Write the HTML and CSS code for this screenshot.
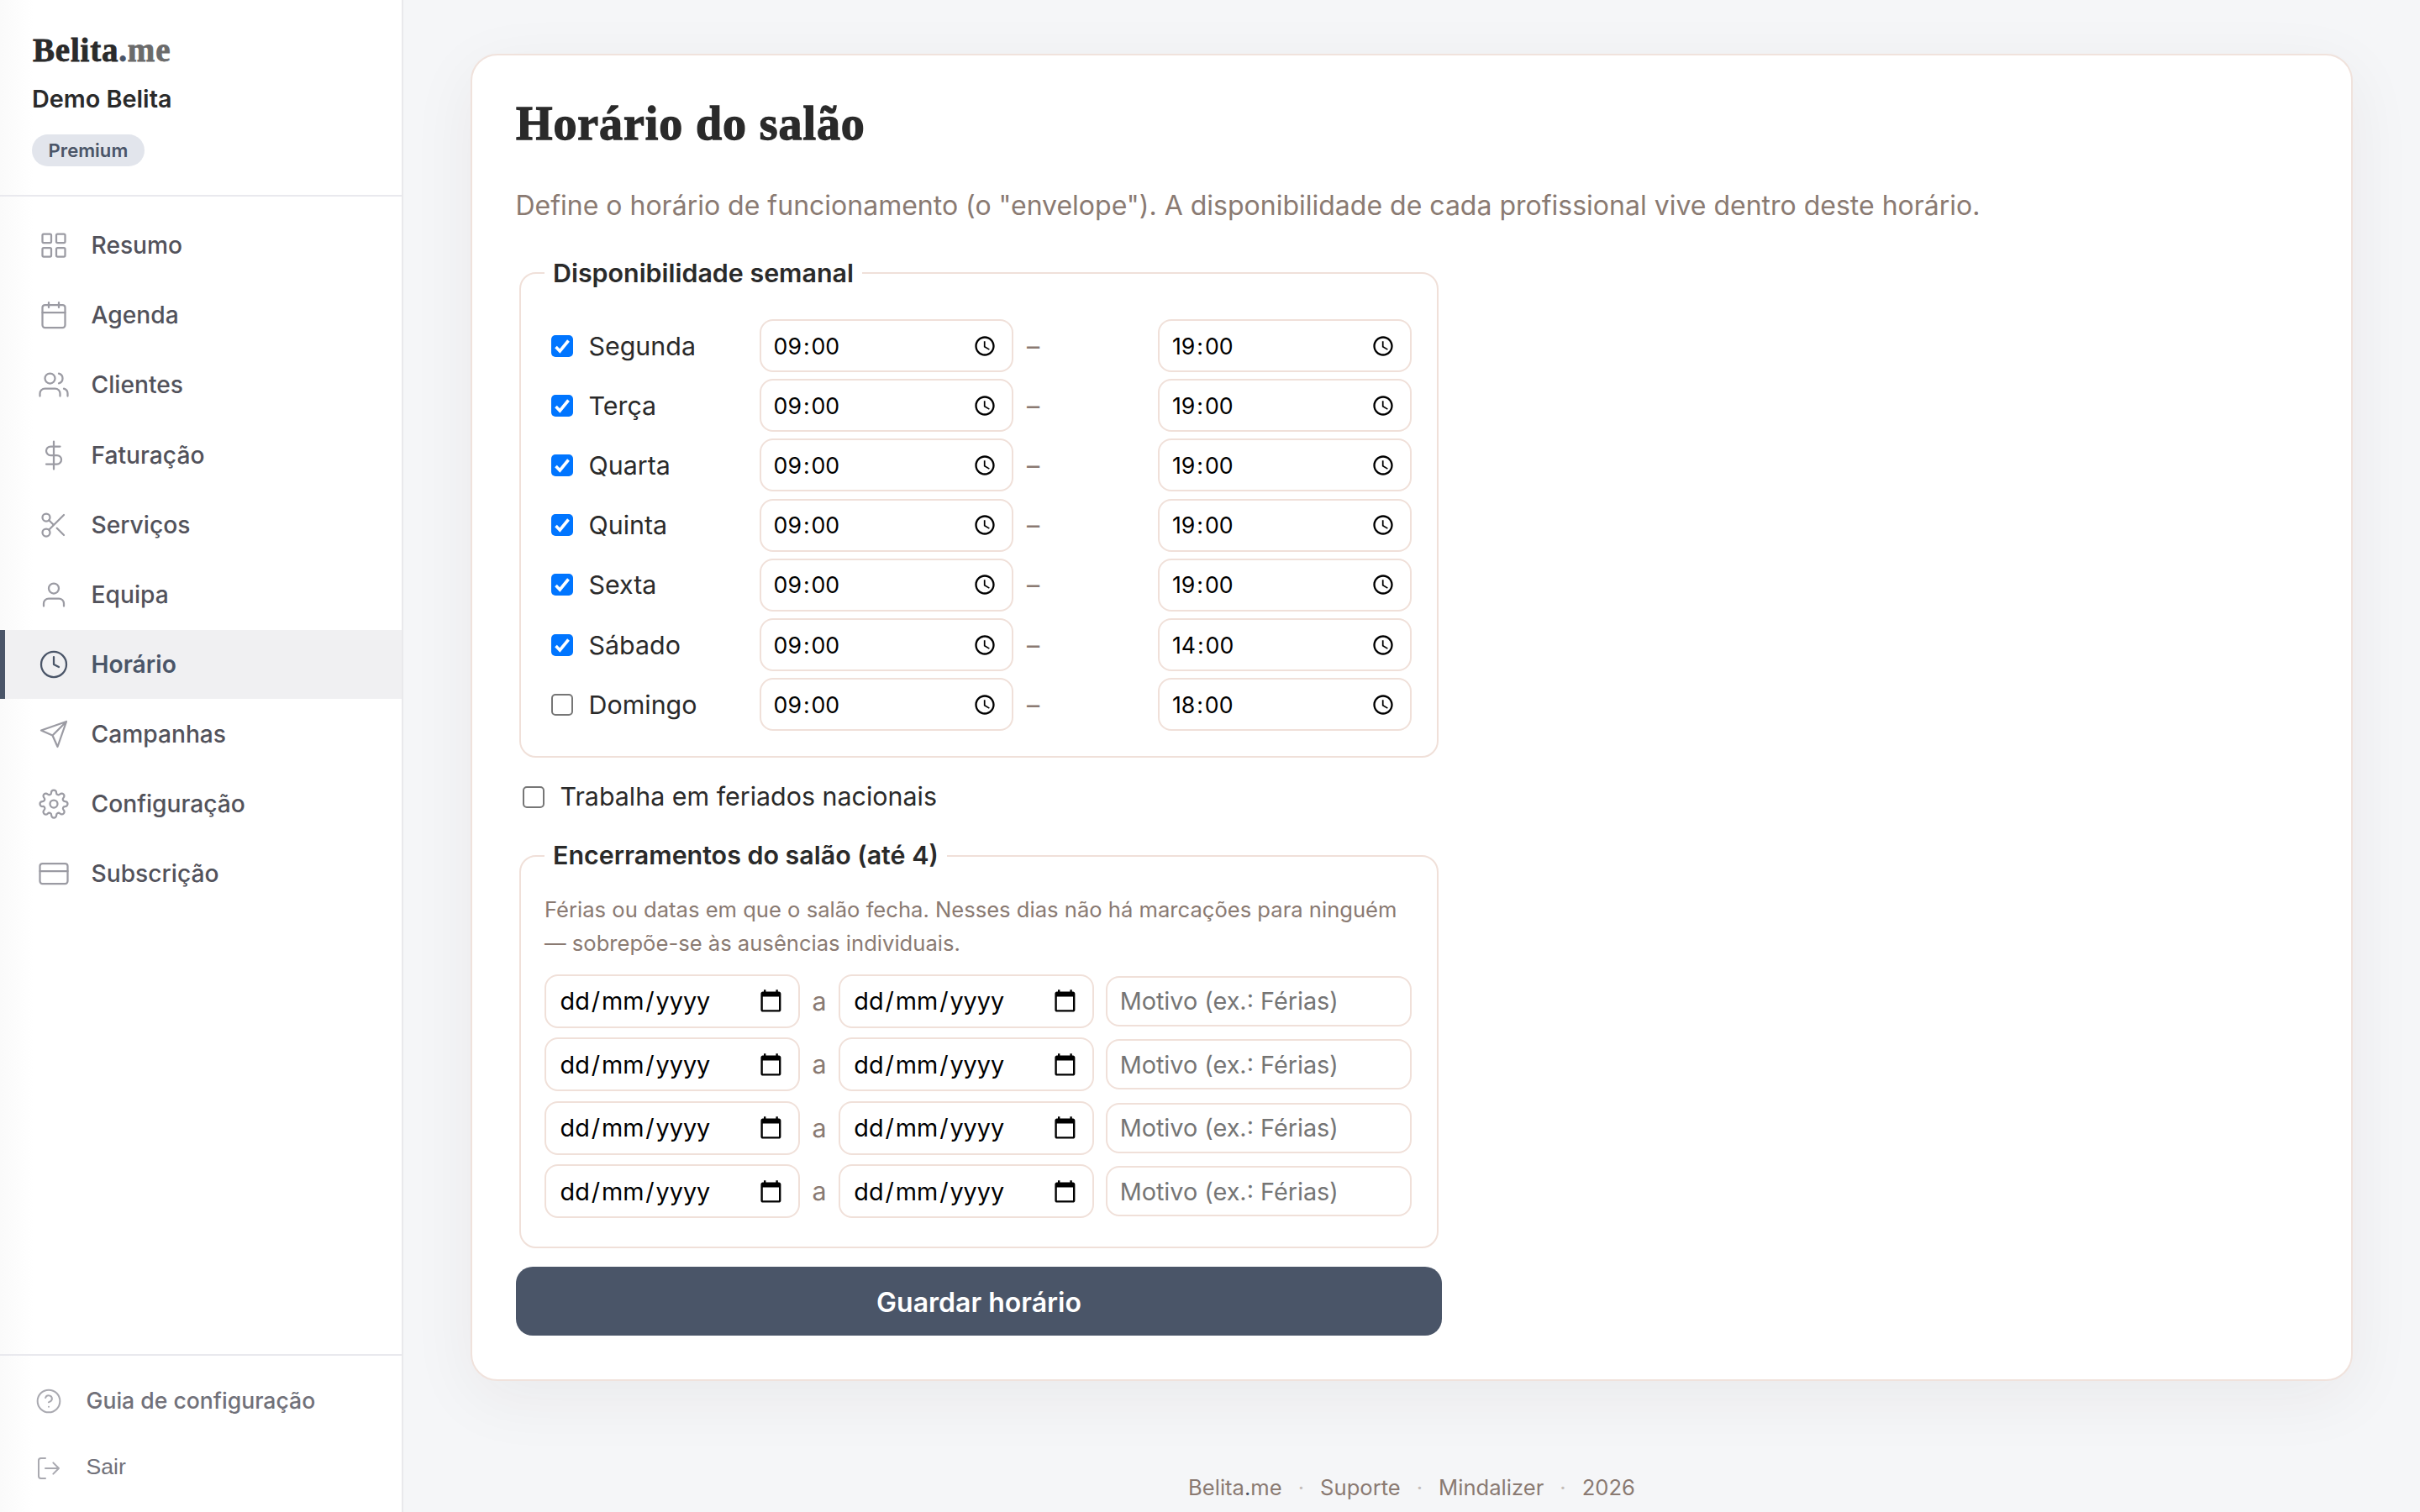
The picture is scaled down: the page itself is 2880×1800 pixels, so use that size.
FILE: index.html
```html
<!DOCTYPE html>
<html lang="pt">
<head>
<meta charset="utf-8">
<title>Horário do salão</title>
<link rel="stylesheet" href="styles.css">
</head>
<body>
<svg class="defs" aria-hidden="true">
  <symbol id="clock-field" viewBox="0 0 24 24"><path d="M11.99 2C6.47 2 2 6.48 2 12s4.47 10 9.99 10C17.52 22 22 17.52 22 12S17.52 2 11.99 2zM12 20c-4.42 0-8-3.58-8-8s3.58-8 8-8 8 3.58 8 8-3.58 8-8 8zm.5-13H11v6l5.25 3.15.75-1.23-4.5-2.67z"/></symbol>
  <symbol id="date-field" viewBox="0 0 24 24"><path d="M20 3h-1V1h-2v2H7V1H5v2H4c-1.1 0-2 .9-2 2v16c0 1.1.9 2 2 2h16c1.1 0 2-.9 2-2V5c0-1.1-.9-2-2-2zm0 18H4V8h16v13z"/></symbol>
</svg>
<div class="app">
  <aside class="sidebar">
    <header class="brand">
      <div class="logo">Belita<span class="logo-dot">.</span><span class="logo-me">me</span></div>
      <div class="salon">Demo Belita</div>
      <span class="badge">Premium</span>
    </header>
    <nav class="nav">
      <a class="nav-item"><svg class="icon" viewBox="0 0 24 24"><rect x="3" y="3" width="7" height="7" rx="1"/><rect x="14" y="3" width="7" height="7" rx="1"/><rect x="14" y="14" width="7" height="7" rx="1"/><rect x="3" y="14" width="7" height="7" rx="1"/></svg><span>Resumo</span></a>
      <a class="nav-item"><svg class="icon" viewBox="0 0 24 24"><rect x="3" y="4" width="18" height="18" rx="2"/><path d="M16 2v4M8 2v4M3 10h18"/></svg><span>Agenda</span></a>
      <a class="nav-item"><svg class="icon" viewBox="0 0 24 24"><path d="M17 21v-2a4 4 0 0 0-4-4H5a4 4 0 0 0-4 4v2"/><circle cx="9" cy="7" r="4"/><path d="M23 21v-2a4 4 0 0 0-3-3.87M16 3.13a4 4 0 0 1 0 7.75"/></svg><span>Clientes</span></a>
      <a class="nav-item"><svg class="icon" viewBox="0 0 24 24"><path d="M12 1v22M17 5H9.500a3.500 3.500 0 0 0 0 7h5a3.500 3.500 0 0 1 0 7H6"/></svg><span>Faturação</span></a>
      <a class="nav-item"><svg class="icon" viewBox="0 0 24 24"><circle cx="6" cy="6" r="3"/><circle cx="6" cy="18" r="3"/><path d="M20 4L8.120 15.880M14.470 14.480L20 20M8.120 8.120L12 12"/></svg><span>Serviços</span></a>
      <a class="nav-item"><svg class="icon" viewBox="0 0 24 24"><path d="M20 21v-2a4 4 0 0 0-4-4H8a4 4 0 0 0-4 4v2"/><circle cx="12" cy="7" r="4"/></svg><span>Equipa</span></a>
      <a class="nav-item active"><svg class="icon" viewBox="0 0 24 24"><circle cx="12" cy="12" r="10"/><path d="M12 6v6l4 2"/></svg><span>Horário</span></a>
      <a class="nav-item"><svg class="icon" viewBox="0 0 24 24"><path d="M22 2L11 13M22 2l-7 20-4-9-9-4z"/></svg><span>Campanhas</span></a>
      <a class="nav-item"><svg class="icon" viewBox="0 0 24 24"><circle cx="12" cy="12" r="3"/><path d="M19.400 15a1.650 1.650 0 0 0 .33 1.820l.06.06a2 2 0 1 1-2.830 2.830l-.06-.06a1.650 1.650 0 0 0-2.800 1.170V21a2 2 0 0 1-4 0v-.09A1.650 1.650 0 0 0 7.180 19.730l-.06.06a2 2 0 1 1-2.830-2.830l.06-.06A1.650 1.650 0 0 0 3.090 14H3a2 2 0 0 1 0-4h.09A1.650 1.650 0 0 0 4.350 7.180l-.06-.06a2 2 0 1 1 2.830-2.830l.06.06A1.650 1.650 0 0 0 10 3.090V3a2 2 0 0 1 4 0v.09a1.650 1.650 0 0 0 2.820 1.260l.06-.06a2 2 0 1 1 2.830 2.830l-.06.06A1.650 1.650 0 0 0 20.910 10H21a2 2 0 0 1 0 4h-.09a1.650 1.650 0 0 0-1.510 1z"/></svg><span>Configuração</span></a>
      <a class="nav-item"><svg class="icon" viewBox="0 0 24 24"><rect x="1" y="4" width="22" height="16" rx="2"/><path d="M1 10h22"/></svg><span>Subscrição</span></a>
    </nav>
    <footer class="side-foot">
      <a class="foot-item medium"><svg class="icon" viewBox="0 0 24 24"><circle cx="12" cy="12" r="10"/><path d="M9.090 9a3 3 0 0 1 5.830 1c0 2-3 3-3 3M12 17h.01"/></svg><span>Guia de configuração</span></a>
      <a class="foot-item logout"><svg class="icon" viewBox="0 0 24 24"><path d="M9 21H5a2 2 0 0 1-2-2V5a2 2 0 0 1 2-2h4M16 17l5-5-5-5M21 12H9"/></svg><span>Sair</span></a>
    </footer>
  </aside>
  <main class="main">
    <section class="card">
      <h1 class="title">Horário do salão</h1>
      <p class="lead">Define o horário de funcionamento (o "envelope"). A disponibilidade de cada profissional vive dentro deste horário.</p>
      <form class="form">
        <div class="group week">
          <div class="legend">Disponibilidade semanal</div>
          <div class="day"><label class="check"><i class="box on"><svg viewBox="0 0 26 26"><path d="M5.500 14l4.800 5L20.500 6.500"/></svg></i><span>Segunda</span></label><div class="field time"><span>09<i>:</i>00</span><svg><use href="#clock-field"/></svg></div><span class="dash">–</span><div class="field time"><span>19<i>:</i>00</span><svg><use href="#clock-field"/></svg></div></div>
          <div class="day"><label class="check"><i class="box on"><svg viewBox="0 0 26 26"><path d="M5.500 14l4.800 5L20.500 6.500"/></svg></i><span>Terça</span></label><div class="field time"><span>09<i>:</i>00</span><svg><use href="#clock-field"/></svg></div><span class="dash">–</span><div class="field time"><span>19<i>:</i>00</span><svg><use href="#clock-field"/></svg></div></div>
          <div class="day"><label class="check"><i class="box on"><svg viewBox="0 0 26 26"><path d="M5.500 14l4.800 5L20.500 6.500"/></svg></i><span>Quarta</span></label><div class="field time"><span>09<i>:</i>00</span><svg><use href="#clock-field"/></svg></div><span class="dash">–</span><div class="field time"><span>19<i>:</i>00</span><svg><use href="#clock-field"/></svg></div></div>
          <div class="day"><label class="check"><i class="box on"><svg viewBox="0 0 26 26"><path d="M5.500 14l4.800 5L20.500 6.500"/></svg></i><span>Quinta</span></label><div class="field time"><span>09<i>:</i>00</span><svg><use href="#clock-field"/></svg></div><span class="dash">–</span><div class="field time"><span>19<i>:</i>00</span><svg><use href="#clock-field"/></svg></div></div>
          <div class="day"><label class="check"><i class="box on"><svg viewBox="0 0 26 26"><path d="M5.500 14l4.800 5L20.500 6.500"/></svg></i><span>Sexta</span></label><div class="field time"><span>09<i>:</i>00</span><svg><use href="#clock-field"/></svg></div><span class="dash">–</span><div class="field time"><span>19<i>:</i>00</span><svg><use href="#clock-field"/></svg></div></div>
          <div class="day"><label class="check"><i class="box on"><svg viewBox="0 0 26 26"><path d="M5.500 14l4.800 5L20.500 6.500"/></svg></i><span>Sábado</span></label><div class="field time"><span>09<i>:</i>00</span><svg><use href="#clock-field"/></svg></div><span class="dash">–</span><div class="field time"><span>14<i>:</i>00</span><svg><use href="#clock-field"/></svg></div></div>
          <div class="day"><label class="check"><i class="box"></i><span>Domingo</span></label><div class="field time"><span>09<i>:</i>00</span><svg><use href="#clock-field"/></svg></div><span class="dash">–</span><div class="field time"><span>18<i>:</i>00</span><svg><use href="#clock-field"/></svg></div></div>
        </div>
        <label class="check holidays"><i class="box"></i><span>Trabalha em feriados nacionais</span></label>
        <div class="group closures">
          <div class="legend">Encerramentos do salão (até 4)</div>
          <p class="hint">Férias ou datas em que o salão fecha. Nesses dias não há marcações para ninguém<br>— sobrepõe-se às ausências individuais.</p>
          <div class="range"><div class="field date"><span>dd<i>/</i>mm<i>/</i>yyyy</span><svg><use href="#date-field"/></svg></div><span class="to">a</span><div class="field date"><span>dd<i>/</i>mm<i>/</i>yyyy</span><svg><use href="#date-field"/></svg></div><input class="field reason" type="text" placeholder="Motivo (ex.: Férias)"></div>
          <div class="range"><div class="field date"><span>dd<i>/</i>mm<i>/</i>yyyy</span><svg><use href="#date-field"/></svg></div><span class="to">a</span><div class="field date"><span>dd<i>/</i>mm<i>/</i>yyyy</span><svg><use href="#date-field"/></svg></div><input class="field reason" type="text" placeholder="Motivo (ex.: Férias)"></div>
          <div class="range"><div class="field date"><span>dd<i>/</i>mm<i>/</i>yyyy</span><svg><use href="#date-field"/></svg></div><span class="to">a</span><div class="field date"><span>dd<i>/</i>mm<i>/</i>yyyy</span><svg><use href="#date-field"/></svg></div><input class="field reason" type="text" placeholder="Motivo (ex.: Férias)"></div>
          <div class="range"><div class="field date"><span>dd<i>/</i>mm<i>/</i>yyyy</span><svg><use href="#date-field"/></svg></div><span class="to">a</span><div class="field date"><span>dd<i>/</i>mm<i>/</i>yyyy</span><svg><use href="#date-field"/></svg></div><input class="field reason" type="text" placeholder="Motivo (ex.: Férias)"></div>
        </div>
        <button class="save" type="button">Guardar horário</button>
      </form>
    </section>
    <footer class="page-foot"><span>Belita<span class="logo-dot">.</span>me</span><i>·</i><span>Suporte</span><i>·</i><span>Mindalizer</span><i>·</i><span>2026</span></footer>
  </main>
</div>
</body>
</html>
```
FILE: styles.css
```css
* { box-sizing: border-box; }
body { margin: 0; font-family: Inter, "Liberation Sans", sans-serif; color: #2a2a2a; background: #f5f6f8; }
.defs { display: none; }
.app { display: flex; height: 1800px; overflow: hidden; }

/* Sidebar */
.sidebar { width: 480px; flex: none; display: flex; flex-direction: column; border-right: 2px solid #e9e9ec; background: linear-gradient(90deg, #fafafa 0, #fff 40px); }
.brand { height: 234px; padding: 38px 38px 0; border-bottom: 2px solid #e9e9ee; }
.logo { font: 700 39px/44px "Liberation Serif", serif; letter-spacing: .8px; padding-left: 1px; -webkit-text-stroke: .8px; }
.logo-dot { color: #4a5568; }
.logo-me { color: #6b6b6b; }
.salon { font-size: 28.800px; line-height: 36px; font-weight: 600; margin-top: 18px; }
.badge { display: inline-block; height: 38px; margin-top: 24px; padding: 0 19.600px; border-radius: 19px; background: #e2e5ec; color: #4a5568; font-size: 22.100px; line-height: 38px; font-weight: 600; }
.nav { padding-top: 17.400px; flex: 1; }
.nav-item { display: flex; align-items: center; gap: 26.500px; height: 81.600px; margin-bottom: 1.540px; padding-left: 40px; border-left: 6px solid transparent; color: #52525b; font-size: 28.200px; font-weight: 500; }
.nav-item.active { border-color: #4a5568; background: #f0f0f2; color: #4a5568; font-weight: 600; }
.icon { width: 36px; height: 36px; flex: none; fill: none; stroke: #9b9ba3; stroke-width: 1.500; stroke-linecap: round; stroke-linejoin: round; }
.active .icon { stroke: #4a5568; }
.side-foot { height: 188px; padding: 13.500px 0 0 42px; border-top: 2px solid #e9e9ee; }
.foot-item { display: flex; align-items: center; gap: 28.500px; height: 80px; color: #71717a; font-size: 26.600px; }
.foot-item.medium { font-weight: 500; }
.foot-item.logout { font-family: "Liberation Sans", Arial, sans-serif; }
.foot-item .icon { width: 32px; height: 32px; stroke: #a9a9b0; }
.foot-item span { margin-top: -2px; }

/* Main card */
.main { flex: 1; padding: 64px 80px 0; }
.card { height: 1580px; padding: 0 52px; border: 2px solid #f0e2dc; border-radius: 32px; background: #fff; box-shadow: 0 20px 80px rgba(44, 40, 30, .06); }
.title { margin: 49px 0 0; font: 700 56px/64px "Liberation Serif", serif; letter-spacing: .9px; -webkit-text-stroke: 1.300px; }
.lead { margin: 41px 0 0; font-size: 32px; line-height: 50px; color: #8a7a72; white-space: nowrap; text-indent: -.6px; }
.form { width: 1102px; margin-top: 54px; }
.group { margin: 0 4px; padding: 0 30px 0 28px; border: 2px solid #f0e0d9; border-radius: 20px; }
.legend { width: max-content; height: 40px; margin-top: -21px; padding: 0 10px; background: #fff; font-size: 30.400px; line-height: 40px; font-weight: 600; }
.week { height: 578px; }
.day { display: grid; grid-template-columns: 240px 302px 140.400px 302px; column-gap: 16px; align-items: center; height: 63.200px; margin-bottom: 8px; }
.legend + .day { margin-top: 35px; }
.check { display: flex; align-items: center; font-size: 30.400px; }
.box { width: 26px; height: 26px; margin: 0 18.500px 0 8px; border: 2px solid #767676; border-radius: 5px; background: #fff; }
.box.on { border: 0; background: #0075ff; }
.box svg { display: block; width: 26px; height: 26px; fill: none; stroke: #fff; stroke-width: 3.600; }
.field { display: flex; align-items: center; justify-content: space-between; border: 2px solid #f0e0d9; border-radius: 16px; background: #fff; color: #000; }
.field i { margin: 0 1.900px; font-style: normal; }
.time { height: 63px; padding: 0 18.500px 0 14.600px; font-size: 26.700px; }
.time svg { width: 28px; height: 28px; }
.dash { color: #8a7a72; font-size: 30.400px; }
.holidays { height: 40px; margin-top: 27px; }
.holidays span { margin-top: -2px; }
.closures { height: 468px; margin-top: 49px; }
.closures .legend { margin-top: -22.500px; }
.hint { margin: 25.500px 0 17px; font-size: 25.600px; line-height: 39.700px; color: #8a7a72; white-space: nowrap; }
.range { display: flex; align-items: center; gap: 14.400px; height: 64.400px; margin-bottom: 11.200px; }
.date { width: 304px; height: 64px; padding: 0 18.500px 0 16.500px; font-size: 28.800px; }
.date svg { width: 28.800px; height: 28.800px; }
.to { color: #8a7a72; font-size: 30.400px; }
.reason { flex: 1; min-width: 0; height: 60px; padding: 0 14.400px; font: 28.800px Inter, sans-serif; }
.reason::placeholder { color: #757575; }
.save { display: block; width: 100%; height: 82px; margin-top: 22px; padding: 2px 0 0; border: 0; border-radius: 20px; background: #4a5568; color: #fff; font: 600 32px Inter, sans-serif; }
.page-foot { display: flex; justify-content: center; gap: 19px; margin-top: 109px; color: #8a7a72; font-size: 25.600px; line-height: 36px; }
.page-foot i { font-style: normal; color: #c4bdb9; }
```
